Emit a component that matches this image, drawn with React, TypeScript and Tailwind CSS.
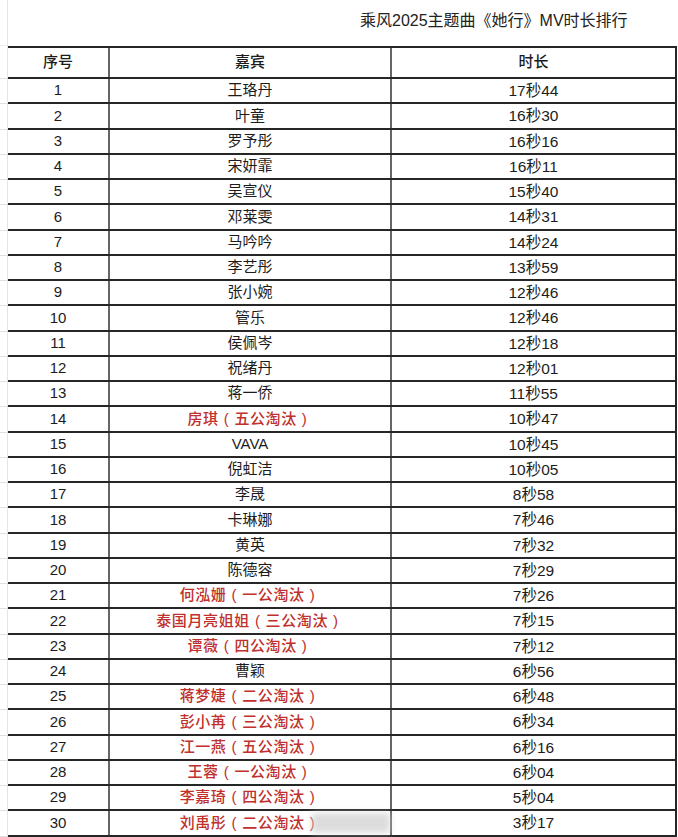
import React from "react";

type Row = { n: number; name: string; time: string; red?: boolean };

const rows: Row[] = [
  { n: 1, name: "王珞丹", time: "17秒44" },
  { n: 2, name: "叶童", time: "16秒30" },
  { n: 3, name: "罗予彤", time: "16秒16" },
  { n: 4, name: "宋妍霏", time: "16秒11" },
  { n: 5, name: "吴宣仪", time: "15秒40" },
  { n: 6, name: "邓莱雯", time: "14秒31" },
  { n: 7, name: "马吟吟", time: "14秒24" },
  { n: 8, name: "李艺彤", time: "13秒59" },
  { n: 9, name: "张小婉", time: "12秒46" },
  { n: 10, name: "管乐", time: "12秒46" },
  { n: 11, name: "侯佩岑", time: "12秒18" },
  { n: 12, name: "祝绪丹", time: "12秒01" },
  { n: 13, name: "蒋一侨", time: "11秒55" },
  { n: 14, name: "房琪（五公淘汰）", time: "10秒47", red: true },
  { n: 15, name: "VAVA", time: "10秒45" },
  { n: 16, name: "倪虹洁", time: "10秒05" },
  { n: 17, name: "李晟", time: "8秒58" },
  { n: 18, name: "卡琳娜", time: "7秒46" },
  { n: 19, name: "黄英", time: "7秒32" },
  { n: 20, name: "陈德容", time: "7秒29" },
  { n: 21, name: "何泓姗（一公淘汰）", time: "7秒26", red: true },
  { n: 22, name: "泰国月亮姐姐（三公淘汰）", time: "7秒15", red: true },
  { n: 23, name: "谭薇（四公淘汰）", time: "7秒12", red: true },
  { n: 24, name: "曹颖", time: "6秒56" },
  { n: 25, name: "蒋梦婕（二公淘汰）", time: "6秒48", red: true },
  { n: 26, name: "彭小苒（三公淘汰）", time: "6秒34", red: true },
  { n: 27, name: "江一燕（五公淘汰）", time: "6秒16", red: true },
  { n: 28, name: "王蓉（一公淘汰）", time: "6秒04", red: true },
  { n: 29, name: "李嘉琦（四公淘汰）", time: "5秒04", red: true },
  { n: 30, name: "刘禹彤（二公淘汰）", time: "3秒17", red: true },
];

const font = {
  fontFamily: '"Liberation Sans", "Noto Sans CJK SC", sans-serif',
};

function RedName({ text }: { text: string }) {
  const [name, rest] = text.split("（");
  const note = rest.replace("）", "");
  return (
    <span className="inline-flex items-center">
      <span>{name}</span>
      <span className="inline-block w-[1.05em] text-center font-normal">(</span>
      <span>{note}</span>
      <span className="inline-block w-[1.05em] text-center font-normal">)</span>
    </span>
  );
}

export default function App() {
  return (
    <div
      className="relative w-[678px] h-[837px] bg-white overflow-hidden text-[#1c1c1c]"
      style={font}
    >
      {/* title area */}
      <div className="flex h-[46px]">
        <div className="w-[8px] border-r border-[#e6e6e6] border-b border-b-[#ececec]" />
        <div className="flex-1 pl-[352px] pt-[11px] text-[16px] leading-[20px] text-[#222]">
          乘风2025主题曲《她行》MV时长排行
        </div>
      </div>

      {/* header */}
      <div className="flex h-[33px]">
        <div className="w-[8px] border-r border-[#e6e6e6] border-b border-b-[#e0e0e0]" />
        <div className="flex w-[669px] border-t-2 border-b-2 border-[#262626]">
          <div className="w-[102px] border-r-2 border-[#666] flex items-center justify-center text-[15px] font-medium">
            序号
          </div>
          <div className="w-[282px] border-r-2 border-[#666] flex items-center justify-center text-[15px] font-medium">
            嘉宾
          </div>
          <div className="flex-1 border-r-2 border-[#262626] flex items-center justify-center text-[15px] font-medium">
            时长
          </div>
        </div>
      </div>

      {rows.map((r) => (
        <div key={r.n} className="flex h-[25.25px]">
          <div className="w-[8px] border-r border-[#e6e6e6] border-b border-b-[#e0e0e0]" />
          <div className="flex w-[669px] border-b-2 border-[#262626]">
            <div className="w-[102px] border-r-2 border-[#666] flex items-center justify-center text-[15px]">
              {r.n}
            </div>
            {r.red ? (
              <div className="w-[282px] border-r-2 border-[#666] flex items-center justify-center text-[15px] text-[#c0302c] font-medium tracking-[0.6px]">
                <RedName text={r.name} />
              </div>
            ) : (
              <div className="w-[282px] border-r-2 border-[#666] flex items-center justify-center text-[15px]">
                {r.name}
              </div>
            )}
            <div className="flex-1 border-r-2 border-[#262626] flex items-center justify-center text-[15.5px]">
              {r.time}
            </div>
          </div>
        </div>
      ))}

      {/* watermark blur */}
      <div className="absolute left-[312px] top-[813px] w-[78px] h-[20px] bg-[#d4d4d4] opacity-80 blur-[3px]" />
    </div>
  );
}
